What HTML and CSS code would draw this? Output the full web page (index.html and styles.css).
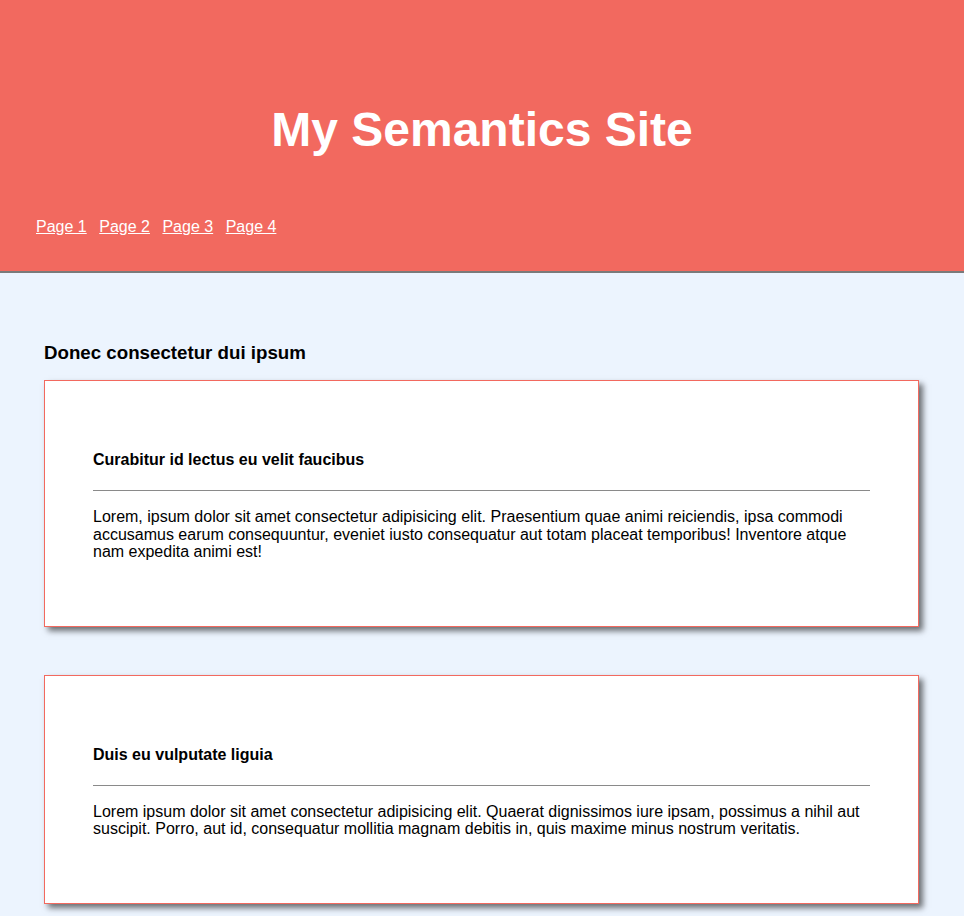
FILE: index.html
```html
<!DOCTYPE html>
<html lang="en">
<head>
<meta charset="utf-8">
<title>My Semantics Site</title>
<link rel="stylesheet" href="styles.css">
</head>
<body>
<header class="site-header">
  <h1 class="site-title">My Semantics Site</h1>
  <nav class="site-nav">
    <a href="#">Page 1</a>
    <a href="#">Page 2</a>
    <a href="#">Page 3</a>
    <a href="#">Page 4</a>
  </nav>
</header>
<main class="main">
  <h3 class="section-title">Donec consectetur dui ipsum</h3>
  <article class="card">
    <h4 class="card-title">Curabitur id lectus eu velit faucibus</h4>
    <hr class="card-rule">
    <p class="card-text">Lorem, ipsum dolor sit amet consectetur adipisicing elit. Praesentium quae animi reiciendis, ipsa commodi accusamus earum consequuntur, eveniet iusto consequatur aut totam placeat temporibus! Inventore atque nam expedita animi est!</p>
  </article>
  <article class="card">
    <h4 class="card-title">Duis eu vulputate liguia</h4>
    <hr class="card-rule">
    <p class="card-text">Lorem ipsum dolor sit amet consectetur adipisicing elit. Quaerat dignissimos iure ipsam, possimus a nihil aut suscipit. Porro, aut id, consequatur mollitia magnam debitis in, quis maxime minus nostrum veritatis.</p>
  </article>
</main>
</body>
</html>
```
FILE: styles.css
```css
* { box-sizing: border-box; }
html, body {
  margin: 0;
  padding: 0;
}
body {
  background: #ecf4fe;
  font-family: "Liberation Sans", Arial, Helvetica, sans-serif;
  color: #000;
  font-size: 16px;
}
.site-header {
  background: #f2695f;
  border-bottom: 2px solid #7a7a7a;
  padding: 102px 36px 36px;
  height: 273px;
}
.site-title {
  margin: 0;
  text-align: center;
  color: #fff;
  font-size: 48px;
  line-height: 56px;
  font-weight: bold;
}
.site-nav {
  display: flex;
  gap: 12.5px;
  margin-top: 60px;
  line-height: 18px;
}
.site-nav a {
  color: #fff;
  text-decoration: underline;
  font-size: 16px;
}
.main {
  padding: 69px 45px 48px 44px;
}
.section-title {
  font-size: 18.72px;
  margin: 0 0 16px;
  line-height: 22px;
}
.card {
  background: #fff;
  border: 1px solid #f2695f;
  box-shadow: 4px 4px 6px rgba(0, 0, 0, 0.55);
  padding: 48px 48px 49px;
  margin-bottom: 48px;
}
.card-title {
  font-size: 16px;
  line-height: 18px;
  margin: 22px 0 21px;
}
.card-rule {
  border: 0;
  border-top: 1px solid #8a8a8a;
  margin: 0 0 17px;
  height: 0;
}
.card-text {
  margin: 0 0 16px;
  line-height: 17.6px;
}
```
